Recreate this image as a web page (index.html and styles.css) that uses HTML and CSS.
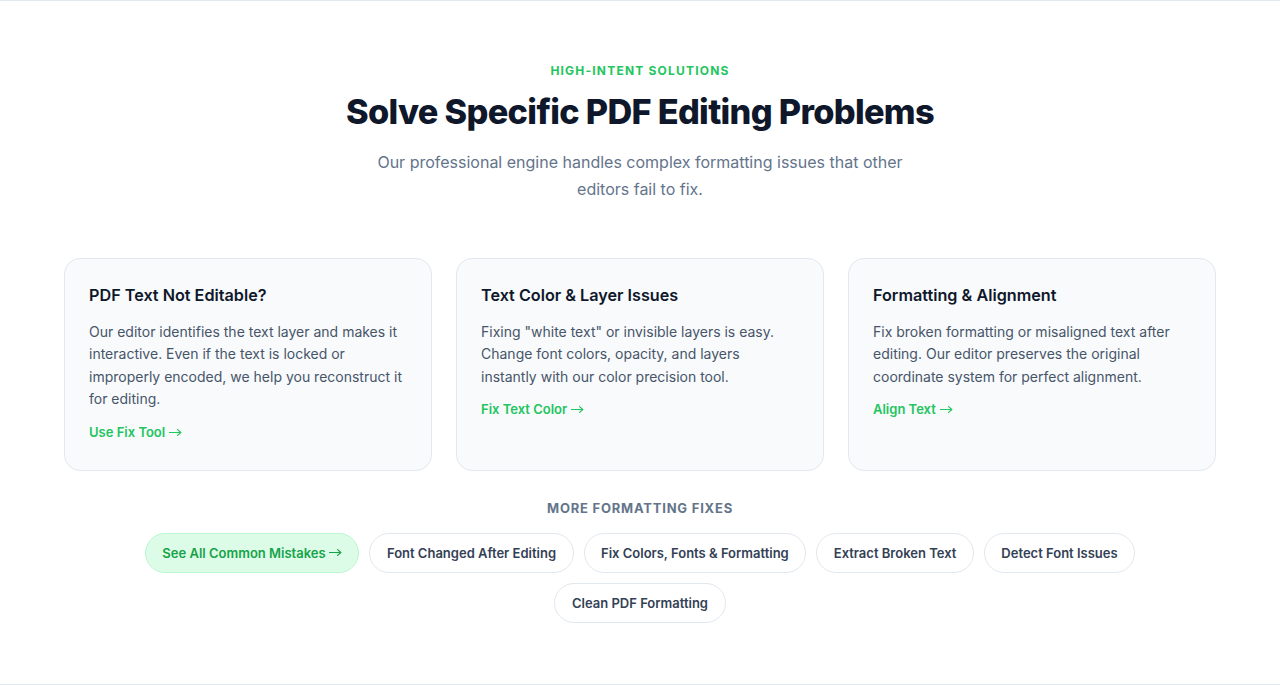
FILE: index.html
```html
<!DOCTYPE html>
<html lang="en">
<head>
<meta charset="utf-8">
<title>Solve Specific PDF Editing Problems</title>
<link rel="stylesheet" href="styles.css">
</head>
<body>
<section class="section">
  <div class="container">
    <header class="intro">
      <p class="eyebrow">HIGH-INTENT SOLUTIONS</p>
      <h2 class="title">Solve Specific PDF Editing Problems</h2>
      <p class="lead">Our professional engine handles complex formatting issues that other editors fail to fix.</p>
    </header>
    <div class="cards">
      <article class="card">
        <h3 class="card-title">PDF Text Not Editable?</h3>
        <p class="card-text">Our editor identifies the text layer and makes it interactive. Even if the text is locked or improperly encoded, we help you reconstruct it for editing.</p>
        <a class="card-link" href="#">Use Fix Tool <svg class="arrow" viewBox="0 0 13 9" aria-hidden="true"><path d="M0.5 4.5H11.8M8.6 1.6L11.8 4.5L8.6 7.4"/></svg></a>
      </article>
      <article class="card">
        <h3 class="card-title">Text Color &amp; Layer Issues</h3>
        <p class="card-text">Fixing "white text" or invisible layers is easy. Change font colors, opacity, and layers instantly with our color precision tool.</p>
        <a class="card-link" href="#">Fix Text Color <svg class="arrow" viewBox="0 0 13 9" aria-hidden="true"><path d="M0.5 4.5H11.8M8.6 1.6L11.8 4.5L8.6 7.4"/></svg></a>
      </article>
      <article class="card">
        <h3 class="card-title">Formatting &amp; Alignment</h3>
        <p class="card-text">Fix broken formatting or misaligned text after editing. Our editor preserves the original coordinate system for perfect alignment.</p>
        <a class="card-link" href="#">Align Text <svg class="arrow" viewBox="0 0 13 9" aria-hidden="true"><path d="M0.5 4.5H11.8M8.6 1.6L11.8 4.5L8.6 7.4"/></svg></a>
      </article>
    </div>
    <p class="more-label">MORE FORMATTING FIXES</p>
    <div class="chips">
      <a class="chip chip-primary" href="#">See All Common Mistakes&nbsp;<svg class="arrow" viewBox="0 0 13 9" aria-hidden="true"><path d="M0.5 4.5H11.8M8.6 1.6L11.8 4.5L8.6 7.4"/></svg></a>
      <a class="chip" href="#">Font Changed After Editing</a>
      <a class="chip" href="#">Fix Colors, Fonts &amp; Formatting</a>
      <a class="chip" href="#">Extract Broken Text</a>
      <a class="chip" href="#">Detect Font Issues</a>
      <a class="chip" href="#">Clean PDF Formatting</a>
    </div>
  </div>
</section>
</body>
</html>
```

FILE: styles.css
```css
* { box-sizing: border-box; }
html, body { margin: 0; padding: 0; }
body {
  font-family: Inter, "Noto Sans", "Liberation Sans", sans-serif;
  background: #ffffff;
  color: #0f172a;
}
.section {
  height: 685px;
  border-top: 1px solid #e2e8f0;
  border-bottom: 1px solid #e2e8f0;
  padding: 60px 0 0;
}
.container {
  max-width: 1152px;
  margin: 0 auto;
}
.intro {
  text-align: center;
  display: flex;
  flex-direction: column;
  align-items: center;
}
.eyebrow {
  margin: 0;
  font-size: 12px;
  line-height: 20px;
  font-weight: 700;
  letter-spacing: 0.1em;
  color: #22c55e;
}
.title {
  margin: 11px 0 0;
  font-size: 34.3px;
  line-height: 40px;
  font-weight: 800;
  letter-spacing: -0.02em;
  color: #0f172a;
}
.lead {
  margin: 17px 0 0;
  max-width: 560px;
  font-size: 16px;
  line-height: 27px;
  color: #64748b;
}
.cards {
  margin-top: 55px;
  display: grid;
  grid-template-columns: repeat(3, 1fr);
  gap: 24px;
}
.card {
  display: flex;
  flex-direction: column;
  align-items: flex-start;
  background: #f8fafc;
  border: 1px solid #e2e8f0;
  border-radius: 16px;
  padding: 24px 24px 28px;
}
.card-title {
  margin: 0;
  font-size: 16.2px;
  line-height: 25px;
  font-weight: 600;
  color: #0f172a;
}
.card-text {
  margin: 13px 0 0;
  font-size: 14px;
  line-height: 22.4px;
  color: #475569;
}
.card-link {
  margin-top: 11px;
  font-size: 13px;
  line-height: 20px;
  font-weight: 600;
  color: #22c55e;
  text-decoration: none;
}
.arrow {
  display: inline-block;
  width: 13px;
  height: 9px;
  margin-left: 1px;
  vertical-align: 0px;
  fill: none;
  stroke: currentColor;
  stroke-width: 1.2;
  stroke-linecap: round;
  stroke-linejoin: round;
}
.more-label {
  margin: 27px 0 0;
  text-align: center;
  font-size: 13px;
  line-height: 20px;
  font-weight: 700;
  letter-spacing: 0.06em;
  color: #64748b;
}
.chips {
  margin-top: 15px;
  display: flex;
  flex-wrap: wrap;
  justify-content: center;
  gap: 10px;
}
.chip {
  display: inline-flex;
  align-items: center;
  height: 40px;
  padding: 0 16.5px;
  border: 1px solid #e2e8f0;
  border-radius: 999px;
  background: #ffffff;
  font-size: 13px;
  font-weight: 600;
  color: #334155;
  text-decoration: none;
  white-space: nowrap;
}
.chip-primary {
  background: #dcfce7;
  border-color: #bbf7d0;
  color: #16a34a;
}
.chip .arrow {
  margin-left: 0;
}
```
